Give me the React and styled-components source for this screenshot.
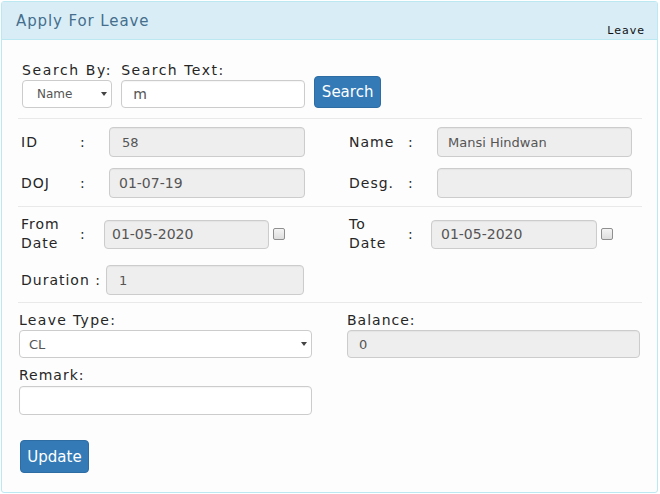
import React from 'react';
import styled, { createGlobalStyle } from 'styled-components';

const Global = createGlobalStyle`
  html, body { margin: 0; padding: 0; background: #fff; }
  body { font-family: "DejaVu Sans", Verdana, sans-serif; color: #222; }
  * { box-sizing: border-box; }
`;

const Panel = styled.div`
  margin: 1px 0 0 1px;
  width: 657px;
  height: 492px;
  border: 1px solid #bce8f1;
  border-radius: 3px;
  background: #fdfdfd;
  display: flex;
  flex-direction: column;
`;

const Header = styled.div`
  height: 38px;
  flex: none;
  background: #d9edf7;
  border-bottom: 1px solid #bce8f1;
  display: flex;
  justify-content: space-between;
  padding: 0 12px 0 14px;
`;

const Title = styled.div`
  align-self: center;
  font-size: 15px;
  letter-spacing: 0.9px;
  color: #456f8c;
  margin-top: 1px;
`;

const Tag = styled.div`
  align-self: flex-end;
  font-size: 11px;
  line-height: 13px;
  letter-spacing: 1px;
  color: #111;
  margin-bottom: 2px;
`;

const Body = styled.div`
  flex: 1;
  padding: 0 15px 0 16px;
  display: flex;
  flex-direction: column;
`;

const Section = styled.div`
  padding: ${p => p.$pad};
`;

const Rule = styled.div`
  height: 1px;
  background: #e9e9e9;
`;

const SearchBar = styled.div`
  display: flex;
  align-items: flex-end;
  gap: 9px;
`;

const Field = styled.div`
  display: flex;
  flex-direction: column;
`;

const Label = styled.label`
  font-size: 14px;
  line-height: 18px;
  letter-spacing: ${p => p.$ls || '1px'};
  color: #262626;
  margin-top: ${p => p.$mt || '0'};
  margin-bottom: ${p => p.$mb || '1px'};
`;

const SelectBox = styled.div`
  position: relative;
  width: ${p => p.$w};
  height: 28px;
`;

const Select = styled.select`
  appearance: none;
  -webkit-appearance: none;
  width: 100%;
  height: 100%;
  border: 1px solid #ccc;
  border-radius: 4px;
  background: #fff;
  font-family: "DejaVu Sans", Verdana, sans-serif;
  font-size: ${p => p.$fs || '13px'};
  color: #555;
  padding: 0 0 0 ${p => p.$pl || '9px'};
  outline: none;
`;

const Arrow = styled.span`
  position: absolute;
  right: 5px;
  top: 12px;
  width: 0;
  height: 0;
  border-left: 3px solid transparent;
  border-right: 3px solid transparent;
  border-top: 4px solid #444;
  pointer-events: none;
`;

const Input = styled.input`
  width: ${p => p.$w};
  height: ${p => p.$h || '30px'};
  flex: none;
  border: 1px solid #ccc;
  border-radius: 4px;
  background: ${p => (p.disabled ? '#eee' : '#fff')};
  box-shadow: inset 0 1px 1px rgba(0, 0, 0, 0.04);
  font-family: "DejaVu Sans", Verdana, sans-serif;
  font-size: ${p => p.$fs || '14px'};
  color: #555;
  -webkit-text-fill-color: #555;
  opacity: 1;
  padding: 0 0 0 ${p => p.$pl || '9px'};
  outline: none;
`;

const Button = styled.button`
  width: ${p => p.$w};
  height: ${p => p.$h};
  background: #337ab7;
  border: 1px solid #2e6da4;
  border-radius: 4px;
  color: #fff;
  font-family: "DejaVu Sans", Verdana, sans-serif;
  font-size: 15px;
  padding: 0;
  cursor: pointer;
`;

const InfoGrid = styled.div`
  display: grid;
  grid-template-columns: 328px 1fr;
  row-gap: ${p => p.$gap || '11px'};
  padding-left: 3px;
`;

const Pair = styled.div`
  display: flex;
  align-items: center;
  height: ${p => p.$h || '30px'};
`;

const PairLabel = styled.span`
  width: 59px;
  flex: none;
  font-size: 14px;
  line-height: 19px;
  letter-spacing: 1px;
  color: #262626;
`;

const Colon = styled.span`
  width: ${p => p.$w};
  flex: none;
  font-size: 14px;
  color: #262626;
`;

const Check = styled.input.attrs({ type: 'checkbox' })`
  appearance: none;
  -webkit-appearance: none;
  margin: 0 0 0 4px;
  width: 12px;
  height: 12px;
  border: 1px solid #8f8f8f;
  border-radius: 2px;
  background: linear-gradient(#f4f4f4, #dedede);
  flex: none;
`;

const DurationLabel = styled.span`
  font-size: 14px;
  letter-spacing: 1px;
  color: #262626;
  margin-right: 5px;
  white-space: pre;
`;

const TwoCol = styled.div`
  display: grid;
  grid-template-columns: 293px 293px;
  column-gap: 35px;
  padding-left: 1px;
`;

const Actions = styled.div`
  margin-top: 25px;
  padding-left: 2px;
`;

export default function App() {
  return (
    <>
      <Global />
      <Panel>
        <Header>
          <Title>Apply For Leave</Title>
          <Tag>Leave</Tag>
        </Header>
        <Body>
          <Section $pad="21px 0 10px 4px">
            <SearchBar>
              <Field>
                <Label $ls="1.6px">Search By:</Label>
                <SelectBox $w="90px">
                  <Select $pl="14px" $fs="12px" defaultValue="Name">
                    <option>Name</option>
                    <option>ID</option>
                  </Select>
                  <Arrow />
                </SelectBox>
              </Field>
              <Field>
                <Label $ls="1.5px">Search Text:</Label>
                <Input $w="184px" $h="28px" $fs="14px" $pl="11px" defaultValue="m" />
              </Field>
              <Button $w="67px" $h="32px">Search</Button>
            </SearchBar>
          </Section>
          <Rule />
          <Section $pad="8px 0 8px 0">
            <InfoGrid>
              <Pair>
                <PairLabel>ID</PairLabel>
                <Colon $w="29px">:</Colon>
                <Input $w="196px" $fs="13px" $pl="12px" disabled defaultValue="58" />
              </Pair>
              <Pair>
                <PairLabel>Name</PairLabel>
                <Colon $w="29px">:</Colon>
                <Input $w="195px" $fs="13px" $pl="10px" disabled defaultValue="Mansi Hindwan" />
              </Pair>
              <Pair>
                <PairLabel>DOJ</PairLabel>
                <Colon $w="29px">:</Colon>
                <Input $w="196px" disabled defaultValue="01-07-19" />
              </Pair>
              <Pair>
                <PairLabel>Desg.</PairLabel>
                <Colon $w="29px">:</Colon>
                <Input $w="195px" disabled defaultValue="" />
              </Pair>
            </InfoGrid>
          </Section>
          <Rule />
          <Section $pad="8px 0 7px 0">
            <InfoGrid $gap="12px">
              <Pair $h="38px">
                <PairLabel>From<br />Date</PairLabel>
                <Colon $w="24px">:</Colon>
                <Input $w="165px" $h="29px" $pl="7px" disabled defaultValue="01-05-2020" />
                <Check />
              </Pair>
              <Pair $h="38px">
                <PairLabel>To<br />Date</PairLabel>
                <Colon $w="23px">:</Colon>
                <Input $w="166px" $h="29px" $pl="9px" disabled defaultValue="01-05-2020" />
                <Check />
              </Pair>
              <Pair>
                <DurationLabel>Duration :</DurationLabel>
                <Input $w="198px" $fs="13px" $pl="12px" disabled defaultValue="1" />
              </Pair>
              <div />
            </InfoGrid>
          </Section>
          <Rule />
          <Section $pad="8px 0 0 0">
            <TwoCol>
              <Field>
                <Label $ls="1.3px">Leave Type:</Label>
                <SelectBox $w="293px">
                  <Select $pl="9px" $fs="13px" defaultValue="CL">
                    <option>CL</option>
                    <option>SL</option>
                    <option>EL</option>
                  </Select>
                  <Arrow />
                </SelectBox>
              </Field>
              <Field>
                <Label>Balance:</Label>
                <Input $w="293px" $h="28px" $fs="13px" $pl="11px" disabled defaultValue="0" />
              </Field>
            </TwoCol>
            <TwoCol>
              <Field>
                <Label $mt="8px" $mb="2px">Remark:</Label>
                <Input $w="293px" $h="29px" defaultValue="" />
              </Field>
            </TwoCol>
            <Actions>
              <Button $w="69px" $h="33px">Update</Button>
            </Actions>
          </Section>
        </Body>
      </Panel>
    </>
  );
}
